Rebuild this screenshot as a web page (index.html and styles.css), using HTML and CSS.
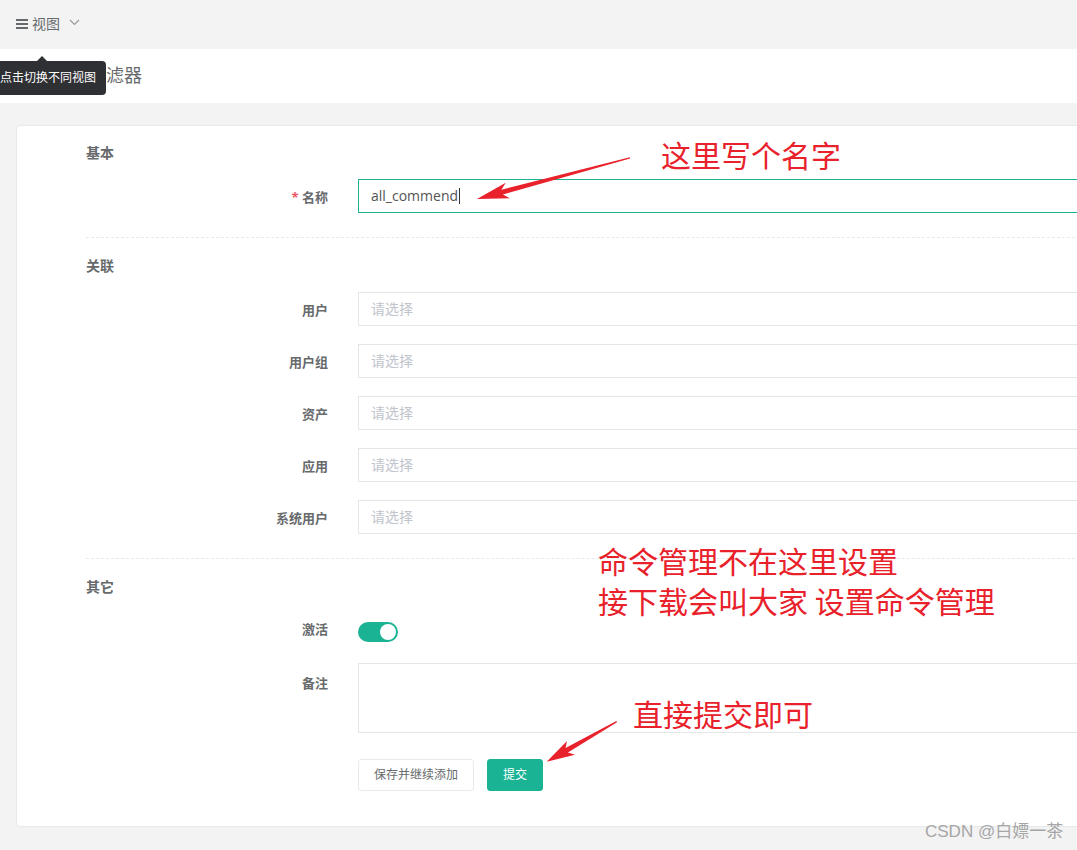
FILE: index.html
```html
<!DOCTYPE html>
<html lang="zh-CN">
<head>
<meta charset="utf-8">
<title>命令过滤器</title>
<link rel="stylesheet" href="styles.css">
</head>
<body>
<div class="page">
  <div class="topbar">
    <span class="view-toggle">
      <svg class="menu-icon" width="12" height="10" viewBox="0 0 12 10"><rect x="0" y="0" width="12" height="2" fill="#676a6c"/><rect x="0" y="4" width="12" height="2" fill="#676a6c"/><rect x="0" y="8" width="12" height="2" fill="#676a6c"/></svg>
      <span class="view-text">视图</span>
      <svg class="chevron" width="11" height="7" viewBox="0 0 11 7"><path d="M1 1 L5.5 5.5 L10 1" fill="none" stroke="#999" stroke-width="1.2"/></svg>
    </span>
  </div>
  <div class="header">
    <h2 class="title">命令过滤器</h2>
  </div>
  <div class="content">
    <div class="card">
      <h3 class="section">基本</h3>
      <div class="row">
        <label class="label"><span class="req">*</span> 名称</label>
        <div class="control"><div class="input focused">all_commend<span class="caret"></span></div></div>
      </div>
      <div class="divider"></div>
      <h3 class="section">关联</h3>
      <div class="row">
        <label class="label">用户</label>
        <div class="control"><div class="input placeholder">请选择</div></div>
      </div>
      <div class="row">
        <label class="label">用户组</label>
        <div class="control"><div class="input placeholder">请选择</div></div>
      </div>
      <div class="row">
        <label class="label">资产</label>
        <div class="control"><div class="input placeholder">请选择</div></div>
      </div>
      <div class="row">
        <label class="label">应用</label>
        <div class="control"><div class="input placeholder">请选择</div></div>
      </div>
      <div class="row">
        <label class="label">系统用户</label>
        <div class="control"><div class="input placeholder">请选择</div></div>
      </div>
      <div class="divider"></div>
      <h3 class="section">其它</h3>
      <div class="row row-switch">
        <label class="label label-switch">激活</label>
        <div class="control"><span class="switch"><span class="knob"></span></span></div>
      </div>
      <div class="row">
        <label class="label label-area">备注</label>
        <div class="control"><div class="textarea"></div></div>
      </div>
      <div class="row actions">
        <div class="label"></div>
        <div class="control buttons">
          <button class="btn btn-default">保存并继续添加</button>
          <button class="btn btn-primary">提交</button>
        </div>
      </div>
    </div>
  </div>

  <div class="tooltip">点击切换不同视图<span class="tip-arrow"></span></div>

  <svg class="arrows" width="1077" height="850" viewBox="0 0 1077 850">
    <polygon fill="#e8212b" points="477,199 509.9,198.2 502.8,194.5 630.1,158.5 629.9,157.3 501.4,189.7 505.7,182.8"/>
    <polygon fill="#e8212b" points="546.7,761.7 575,754.7 567.9,752.5 617,722.3 616.4,721.1 565.5,748.1 567,740.9"/>
  </svg>
  <div class="note note-1">这里写个名字</div>
  <div class="note note-2">命令管理不在这里设置<br>接下载会叫大家 设置命令管理</div>
  <div class="note note-3">直接提交即可</div>
  <div class="watermark">CSDN @白嫖一茶</div>
</div>
</body>
</html>
```
FILE: styles.css
```css
* { box-sizing: border-box; }
html, body {
  margin: 0;
  padding: 0;
}
body {
  background: #f3f3f4;
  font-family: "Open Sans", "Noto Sans CJK SC", sans-serif;
  color: #676a6c;
}
.page {
  position: relative;
  width: 1077px;
  height: 850px;
  overflow: hidden;
}
.topbar {
  height: 49px;
  background: #f3f3f4;
  display: flex;
  align-items: center;
  padding-left: 16px;
}
.view-toggle {
  display: flex;
  align-items: center;
  font-size: 14px;
  color: #676a6c;
  margin-top: -2px;
}
.menu-icon { margin-right: 4px; }
.view-text { line-height: 20px; }
.chevron { margin-left: 9px; margin-top: -2px; }

.header {
  height: 54px;
  background: #fff;
  display: flex;
  align-items: center;
  padding-left: 52px;
}
.title {
  margin: 0;
  font-size: 18px;
  font-weight: 400;
  color: #676a6c;
  line-height: 24px;
  margin-top: -2px;
}
.content {
  padding: 22px 0 0 16px;
}
.card {
  width: 1200px;
  background: #fff;
  border: 1px solid #e7eaec;
  border-radius: 4px;
  padding: 19px 0 35px 69px;
}
.section {
  margin: 0 0 18px 0;
  font-size: 14px;
  font-weight: 700;
  line-height: 16px;
  color: #676a6c;
}
.row {
  display: flex;
  align-items: flex-start;
  margin-bottom: 18px;
}
.label {
  width: 242px;
  flex: none;
  text-align: right;
  font-size: 13px;
  font-weight: 700;
  line-height: 16px;
  padding-top: 10px;
  color: #676a6c;
}
.req { color: #ed5565; }
.control {
  flex: 1;
  margin-left: 30px;
}
.input {
  height: 34px;
  border: 1px solid #e5e6e7;
  padding: 0 12px;
  font-size: 14px;
  line-height: 32px;
  color: #555;
}
.input.focused { border-color: #1ab394; }
.caret {
  display: inline-block;
  width: 1px;
  height: 16px;
  background: #333;
  vertical-align: -3px;
  margin-left: 1px;
}
.placeholder { color: #c0c4cc; }
.divider {
  border-top: 1px dashed #e7eaec;
  margin: 24px 0 20px 0;
  height: 0;
}
.row-switch { height: 32px; }
.label-switch { padding-top: 8px; }
.switch {
  display: inline-block;
  position: relative;
  margin-top: 9px;
  width: 40px;
  height: 20px;
  border-radius: 10px;
  background: #1ab394;
}
.knob {
  position: absolute;
  right: 2px;
  top: 2px;
  width: 16px;
  height: 16px;
  border-radius: 50%;
  background: #fff;
}
.label-area { padding-top: 12px; }
.textarea {
  height: 70px;
  border: 1px solid #e5e6e7;
}
.actions { margin-top: 26px; margin-bottom: 0; }
.actions .label { padding-top: 0; }
.buttons {
  display: flex;
  gap: 13px;
}
.btn {
  height: 32px;
  font-family: "Open Sans", "Noto Sans CJK SC", sans-serif;
  font-size: 12px;
  border-radius: 3px;
  padding: 0 15px;
  line-height: 30px;
}
.btn-default {
  width: 116px;
  background: #fff;
  border: 1px solid #e7eaec;
  color: #676a6c;
}
.btn-primary {
  width: 56px;
  background: #1ab394;
  border: 1px solid #1ab394;
  color: #fff;
}

.tooltip {
  position: absolute;
  left: -10px;
  top: 61px;
  width: 116px;
  height: 34px;
  padding: 0 10px;
  background: #2f3033;
  border-radius: 4px;
  color: #fff;
  font-size: 12px;
  line-height: 34px;
  white-space: nowrap;
}
.tip-arrow {
  position: absolute;
  left: 47px;
  top: -5px;
  width: 0;
  height: 0;
  border-left: 5px solid transparent;
  border-right: 5px solid transparent;
  border-bottom: 5px solid #2f3033;
}
.arrows {
  position: absolute;
  left: 0;
  top: 0;
  pointer-events: none;
}
.note {
  position: absolute;
  font-family: "Noto Sans CJK SC", sans-serif;
  font-size: 30px;
  line-height: 30px;
  color: #e8212b;
  white-space: nowrap;
}
.note-1 { left: 661px; top: 139px; }
.note-2 { left: 598px; top: 540px; line-height: 40px; }
.note-3 { left: 633px; top: 698px; }
.watermark {
  position: absolute;
  left: 925px;
  top: 822px;
  font-family: "Liberation Sans", "Noto Sans CJK SC", sans-serif;
  font-size: 17px;
  line-height: 20px;
  color: #a6a6a6;
  white-space: nowrap;
}
```
